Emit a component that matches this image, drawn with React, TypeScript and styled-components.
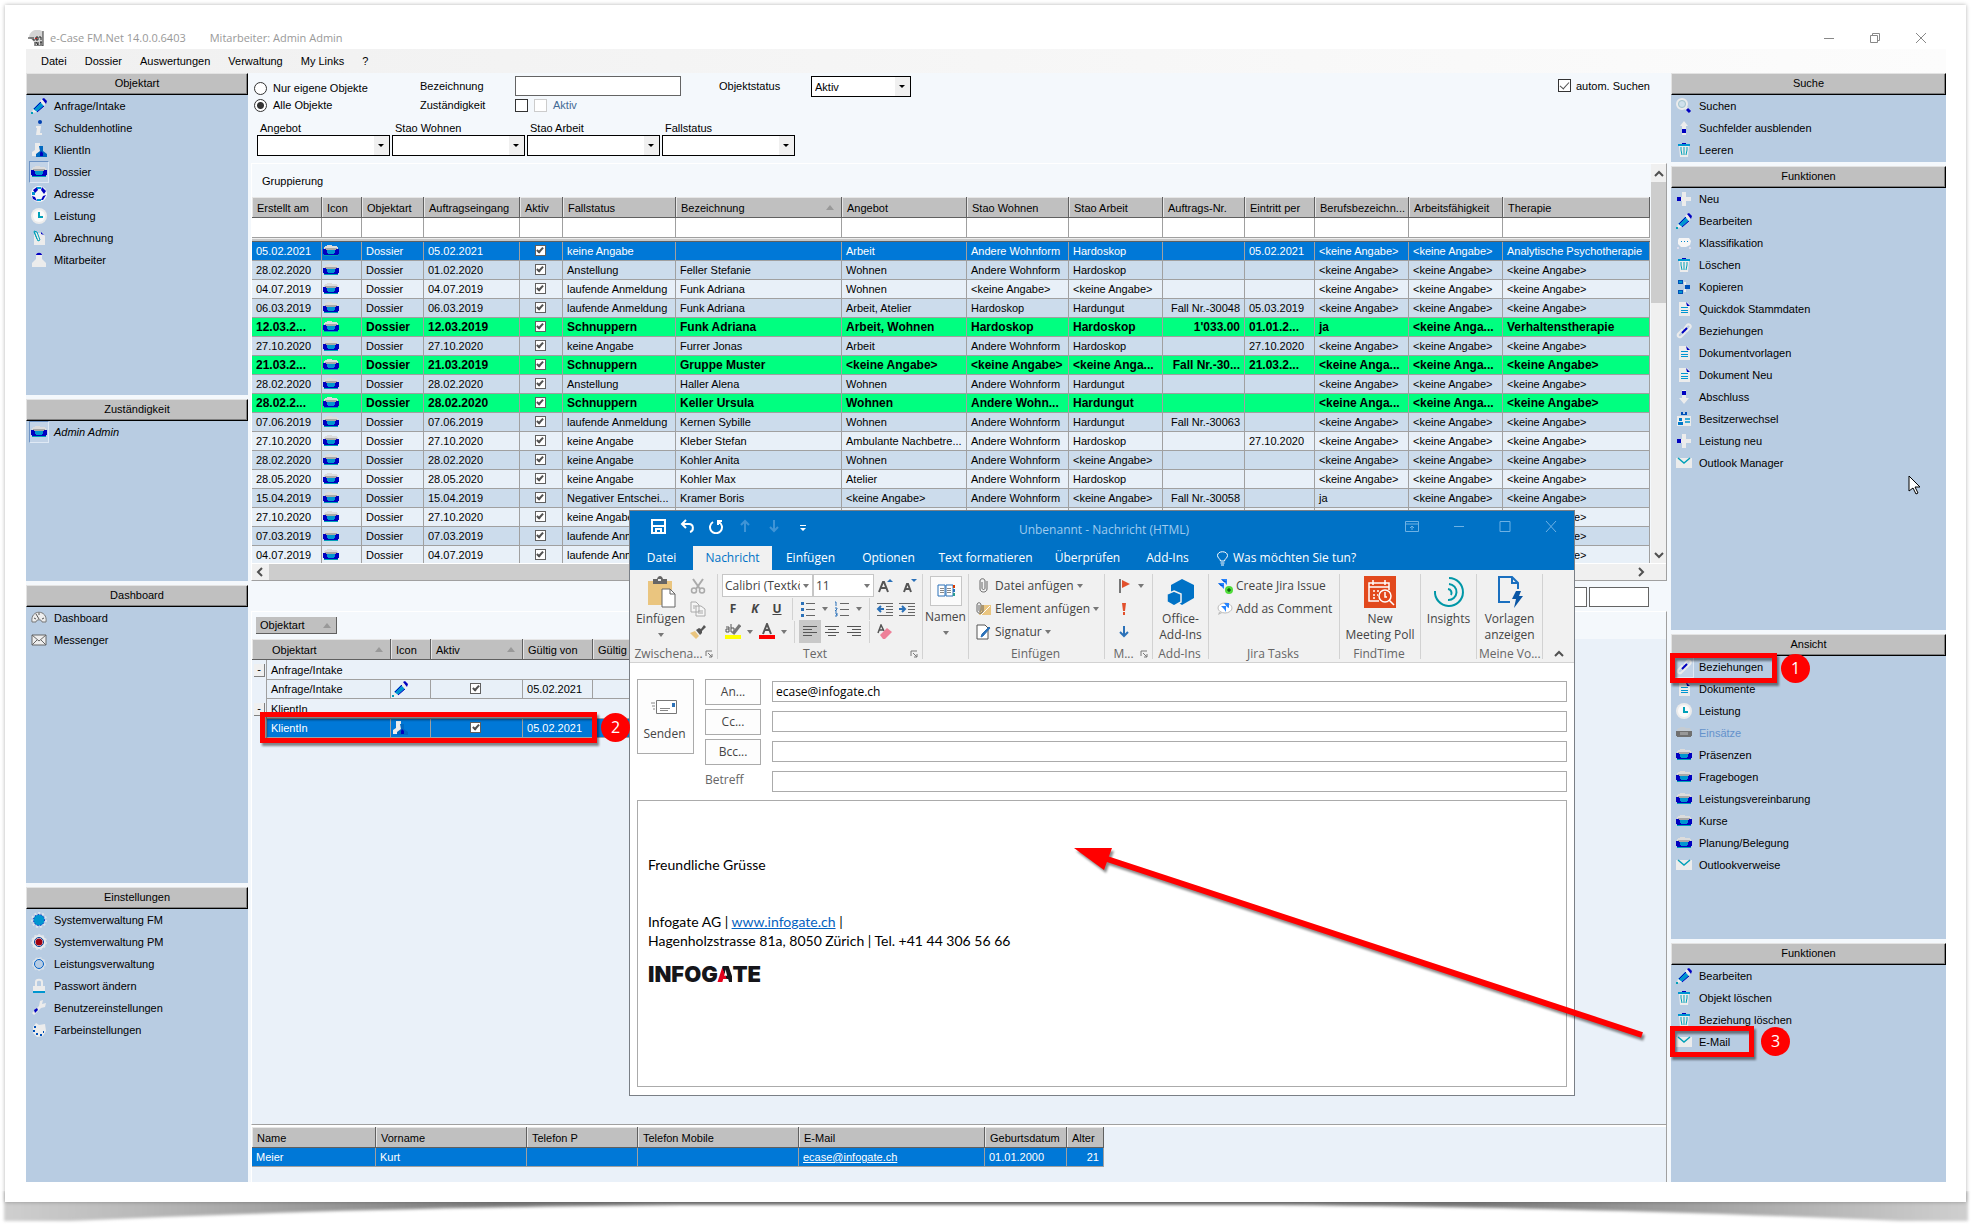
import React from "react";
import styled, { createGlobalStyle, css } from "styled-components";

const SANS = `"Liberation Sans", Arial, sans-serif`;
const HUMAN = `"Open Sans", "Noto Sans", sans-serif`;

const GlobalStyle = createGlobalStyle`
  *, *::before, *::after { box-sizing: border-box; }
  body { margin: 0; background: #fff; font: 11px/14px ${SANS}; color: #000; }
  button, input, select { font: inherit; color: inherit; margin: 0; border-radius: 0; }
  button { background: none; border: 0; padding: 0; text-align: left; }
  svg { display: block; flex: none; }
`;

/* ---------- page frame ---------- */

const Page = styled.div`
  position: relative;
  min-height: 100vh;
  overflow: hidden;
  padding: 5px 14px 29px 5px;
  display: flex;
`;

const CurlShadow = styled.svg`
  position: absolute;
  left: 0;
  bottom: 0;
  width: 100%;
  height: 40px;
`;

const Card = styled.div`
  position: relative;
  flex: 1;
  min-width: 0;
  background: #fff;
  box-shadow: 0 0 4px rgba(0, 0, 0, 0.3);
  padding: 20px 20px 20px 21px;
  display: flex;
  flex-direction: column;
`;

const TitleBar = styled.header`
  height: 24px;
  display: flex;
  align-items: center;
  gap: 6px;
  padding: 1px 19px 0 2px;
  font: 11px/16px ${HUMAN};
  color: #999;
`;

const TitleText = styled.span`
  margin-right: 18px;
`;

const CaptionButtons = styled.div`
  margin-left: auto;
  display: flex;
  gap: 34px;
`;

const MenuBar = styled.nav`
  height: 24px;
  display: flex;
  align-items: center;
  padding-left: 6px;
  background: linear-gradient(90deg, #f0f0f0, #fcfcfc);
`;

const MenuItem = styled.button`
  padding: 0 9px;
`;

const Shell = styled.div`
  flex: 1;
  display: grid;
  grid-template-columns: 222px minmax(0, 1fr) 275px;
  background: #f4f8fc;
`;

/* ---------- side panels ---------- */

const Side = styled.aside`
  display: flex;
  flex-direction: column;
  gap: 4px;
`;

const PanelBox = styled.section<{ $share: number }>`
  flex: ${(p) => p.$share} 1 0px;
  background: #b8cce2;
`;

const PanelTitle = styled.h2`
  margin: 0;
  height: 22px;
  font: 11px/18px ${SANS};
  text-align: center;
  background: #c0c0c0;
  border: solid;
  border-width: 1px;
  border-color: #e3e3e3 #000 #000 #e3e3e3;
  box-shadow: inset -1px -1px 0 #808080;
`;

const PanelItem = styled.button<{ $disabled?: boolean; $italic?: boolean }>`
  width: 100%;
  height: 22px;
  display: flex;
  align-items: center;
  gap: 5px;
  padding-left: 3px;
  color: ${(p) => (p.$disabled ? "#6492cc" : "#000")};
  font-style: ${(p) => (p.$italic ? "italic" : "normal")};
  white-space: nowrap;
`;

const IconSlot = styled.span<{ $active?: boolean }>`
  width: 20px;
  height: 22px;
  display: grid;
  place-items: center;
  border: 1px solid transparent;
  ${(p) =>
    p.$active &&
    css`
      border-color: #6d93c4 #dfe9f5 #dfe9f5 #6d93c4;
      background: #c2d3e7;
    `}
`;

/* ---------- centre column ---------- */

const Centre = styled.main`
  display: flex;
  flex-direction: column;
  padding: 0 4px 0 3px;
  min-width: 0;
`;

const SearchForm = styled.form`
  height: 90px;
  display: flex;
  flex-direction: column;
  padding: 3px 17px 0 3px;
`;

const SearchTop = styled.div`
  display: flex;
  height: 44px;
`;

const Stack = styled.div<{ $width: number; $gap: number; $top: number }>`
  width: ${(p) => p.$width}px;
  display: flex;
  flex-direction: column;
  gap: ${(p) => p.$gap}px;
  padding-top: ${(p) => p.$top}px;
`;

const Field = styled.div`
  display: flex;
  align-items: center;
  gap: 6px;
`;

const TopCell = styled.div<{ $width: number }>`
  width: ${(p) => p.$width}px;
  display: flex;
  flex-direction: column;
  gap: 2px;
`;

const AutoSearch = styled.div`
  margin-left: auto;
  display: flex;
  align-items: flex-start;
  gap: 5px;
  padding-top: 3px;
`;

const RadioDot = styled.input`
  appearance: none;
  width: 13px;
  height: 13px;
  border: 1px solid #333;
  border-radius: 50%;
  background: #fff;
  &:checked {
    background: radial-gradient(circle, #333 0 3px, #fff 4px);
  }
`;

const Tick = styled.input<{ $small?: boolean }>`
  appearance: none;
  flex: none;
  width: ${(p) => (p.$small ? 11 : 13)}px;
  height: ${(p) => (p.$small ? 11 : 13)}px;
  border: 1px solid ${(p) => (p.disabled ? "#ccc" : p.$small ? "#606060" : "#333")};
  background: #fff;
  display: inline-grid;
  place-items: center;
  &:checked::after {
    content: "";
    width: ${(p) => (p.$small ? 4 : 5)}px;
    height: ${(p) => (p.$small ? 7 : 9)}px;
    margin-top: -2px;
    border: solid #505050;
    border-width: 0 ${(p) => (p.$small ? "2px 2px" : "1px 1px")} 0;
    transform: rotate(42deg);
  }
`;

const MutedLabel = styled.label`
  color: #426a94;
`;

const TextBox = styled.input<{ $width: number }>`
  width: ${(p) => p.$width}px;
  height: 20px;
  border: 1px solid #646464;
  background: #fff;
  padding: 0 4px;
`;

const SelectWrap = styled.span<{ $width: number }>`
  position: relative;
  display: block;
  width: ${(p) => p.$width}px;
  select {
    appearance: none;
    display: block;
    width: 100%;
    height: 21px;
    border: 1px solid #000;
    background: linear-gradient(270deg, #f0f0f0 15px, #fff 15px);
    padding: 0 18px 0 3px;
  }
  &::after {
    content: "";
    position: absolute;
    right: 6px;
    top: 9px;
    border: 3px solid transparent;
    border-top-color: #000;
    border-bottom: 0;
    pointer-events: none;
  }
`;

const FilterRow = styled.div`
  display: flex;
  gap: 2px;
  padding-left: 3px;
`;

const FilterField = styled.div`
  display: flex;
  flex-direction: column;
  label {
    padding: 2px 0 0 3px;
    line-height: 13px;
  }
`;

/* ---------- object grid ---------- */

const Sunken = styled.section<{ $grow?: boolean }>`
  display: flex;
  flex-direction: column;
  flex: ${(p) => (p.$grow ? "1 1 auto" : "none")};
  border: solid;
  border-width: 1px;
  border-color: #fff #a0a0a0 #a0a0a0 #fff;
`;

const GridFrame = styled.div`
  display: grid;
  grid-template-columns: minmax(0, 1fr) 16px;
`;

const GridView = styled.div`
  height: 399px;
  overflow: hidden;
`;

const GroupHint = styled.div`
  height: 33px;
  padding: 10px 10px 0;
  line-height: 14px;
`;

const Table = styled.table<{ $fill?: boolean }>`
  table-layout: fixed;
  border-collapse: separate;
  border-spacing: 0;
  width: ${(p) => (p.$fill ? "100%" : "0")};
  td,
  th {
    padding: 0 4px;
    overflow: hidden;
    white-space: nowrap;
  }
`;

const Th = styled.th<{ $indent?: boolean }>`
  height: 21px;
  font-weight: normal;
  text-align: left;
  background: #c0c0c0;
  border-right: 1px solid #606060;
  border-bottom: 1px solid #606060;
  box-shadow: inset 1px 1px 0 #e6e6e6;
  ${(p) =>
    p.$indent &&
    css`
      && {
        padding-left: 19px;
      }
    `}
`;

const HeadRow = styled.span`
  display: flex;
  align-items: center;
  justify-content: space-between;
  padding: 1px 0 0 1px;
`;

const SortMark = styled.i`
  border: 4px solid transparent;
  border-bottom: 5px solid #999;
  border-top: 0;
  margin-right: 3px;
`;

const FilterCell = styled.td`
  height: 20px;
  background: #fff;
  border-right: 1px solid #a0a0a0;
  border-bottom: 1px solid #a0a0a0;
`;

const BandCell = styled.td`
  height: 4px;
  background: #c8c8c8;
  border-top: 1px solid #f0f0f0;
  border-bottom: 1px solid #606060;
`;

type Tone = "selected" | "green" | "dark" | "light";
const toneColour: Record<Tone, string> = {
  selected: "#0078d7",
  green: "#00ff80",
  dark: "#ccdcec",
  light: "#e8f0f8",
};

const Row = styled.tr<{ $tone: Tone }>`
  background: ${(p) => toneColour[p.$tone]};
  color: ${(p) => (p.$tone === "selected" ? "#fff" : "#000")};
  font-weight: ${(p) => (p.$tone === "green" ? "bold" : "normal")};
  font-size: ${(p) => (p.$tone === "green" ? 12 : 11)}px;
`;

const Td = styled.td<{ $align?: "center" | "right" | "icon" }>`
  height: 19px;
  line-height: 14px;
  border-right: 1px solid #a0a0a0;
  border-bottom: 1px solid #a0a0a0;
  text-align: ${(p) => (p.$align === "center" || p.$align === "right" ? p.$align : "left")};
  ${(p) =>
    p.$align === "icon" &&
    css`
      && {
        padding: 0 1px;
      }
    `}
  input {
    vertical-align: middle;
    margin: 0 2px 2px 0;
  }
  a {
    color: inherit;
  }
`;

const VBar = styled.div`
  display: flex;
  flex-direction: column;
  align-items: center;
  background: #f0f0f0;
  margin-left: 1px;
  padding: 5px 0 3px;
`;

const VThumb = styled.div`
  width: 100%;
  height: 121px;
  margin: 3px 0 auto;
  background: #cdcdcd;
`;

const HBar = styled.div`
  grid-column: 1 / 3;
  display: flex;
  align-items: center;
  height: 17px;
  background: #f0f0f0;
  border-top: 1px solid #fff;
  padding: 0 20px 0 3px;
`;

const HThumb = styled.div`
  width: 900px;
  height: 100%;
  margin: 0 auto 0 4px;
  background: #cdcdcd;
`;

const PagerStrip = styled.div`
  height: 30px;
  display: flex;
  justify-content: flex-end;
  align-items: flex-start;
  gap: 2px;
  padding: 6px 18px 0 0;
`;

/* ---------- relations and detail grids ---------- */

const ChipBar = styled.div`
  height: 27px;
  padding: 5px 4px;
`;

const Chip = styled.button`
  width: 81px;
  height: 17px;
  display: flex;
  align-items: center;
  justify-content: space-between;
  padding: 0 2px 0 4px;
  background: #c0c0c0;
  border-right: 1px solid #606060;
  border-bottom: 1px solid #606060;
`;

const Pale = styled.div`
  flex: 1;
  background: #eaf1f9;
`;

const GroupTd = styled.td`
  height: 20px;
  border-bottom: 1px solid #a0a0a0;
`;

const ExpandTd = styled.td`
  background: #eaf1f9;
  border-right: 1px solid #a0a0a0;
  && {
    padding: 0 0 0 2px;
  }
`;

const Expander = styled.button`
  width: 11px;
  height: 13px;
  line-height: 11px;
  text-align: center;
  background: #f0f0f0;
  border-right: 1px solid #808080;
  border-bottom: 1px solid #808080;
  display: block;
`;

const Detail = styled.section`
  height: 57px;
  background: #eaf1f9;
  border-right: 1px solid #a0a0a0;
  border-left: 1px solid #fff;
  padding-top: 2px;
  box-shadow: inset 0 2px 0 #fff;
`;

/* ---------- mail window ---------- */

const MailWindow = styled.div`
  position: absolute;
  left: 624px;
  top: 505px;
  width: 946px;
  height: 586px;
  border: 1px solid #7a7f86;
  background: #fff;
  display: flex;
  flex-direction: column;
  font: 12px/16px ${HUMAN};
  color: #444;
`;

const MailTitle = styled.div`
  height: 35px;
  background: #0072c6;
  color: #9fcbee;
  display: grid;
  grid-template-columns: 1fr auto 1fr;
  align-items: center;
  padding: 0 17px 4px 21px;
`;

const QuickBar = styled.div`
  display: flex;
  align-items: center;
  gap: 14px;
`;

const MailCaption = styled.div`
  display: flex;
  justify-content: flex-end;
  gap: 34px;
`;

const MailName = styled.span`
  padding-top: 7px;
`;

const TabBar = styled.div`
  height: 24px;
  display: flex;
  background: #0072c6;
`;

const Tab = styled.button<{ $width: number; $on?: boolean }>`
  width: ${(p) => p.$width}px;
  text-align: center;
  white-space: nowrap;
  color: ${(p) => (p.$on ? "#0072c6" : "#fff")};
  background: ${(p) => (p.$on ? "#f1f1f1" : "transparent")};
`;

const TellMe = styled.button`
  display: flex;
  align-items: center;
  gap: 5px;
  padding-left: 14px;
  color: #fff;
  white-space: nowrap;
`;

const Ribbon = styled.div`
  height: 93px;
  background: #f1f1f1;
  border-bottom: 1px solid #d2d2d2;
  display: grid;
  grid-template-columns: 88px 205px 46px 136px 48px 56px 131px 81px 56px 66px 1fr;
  padding: 4px 0 3px;
`;

const RGroup = styled.div`
  display: flex;
  flex-direction: column;
  border-right: 1px solid #d2d2d2;
  min-width: 0;
`;

const RBody = styled.div<{ $pad?: number }>`
  flex: 1;
  display: flex;
  padding-left: ${(p) => p.$pad ?? 0}px;
  min-width: 0;
`;

const RLabel = styled.div`
  height: 10px;
  line-height: 10px;
  display: flex;
  align-items: center;
  color: #666;
  padding: 0 4px 0 2px;
  white-space: nowrap;
  span {
    flex: 1;
    text-align: center;
  }
`;

const Big = styled.button`
  flex: 1;
  display: flex;
  flex-direction: column;
  align-items: center;
  padding-top: 2px;
  text-align: center;
  white-space: nowrap;
`;

const BigIcon = styled.span<{ $boxed?: boolean }>`
  height: 32px;
  min-width: 32px;
  margin-bottom: 3px;
  display: grid;
  place-items: center;
  ${(p) =>
    p.$boxed &&
    css`
      height: 30px;
      border: 1px solid #c6c6c6;
      background: #fbfbfb;
    `}
`;

const Caret = styled.i`
  display: inline-block;
  flex: none;
  margin: 6px auto 0;
  border: 3px solid transparent;
  border-top: 4px solid #777;
  border-bottom: 0;
`;

const ToolCol = styled.div<{ $width?: number }>`
  width: ${(p) => (p.$width ? `${p.$width}px` : "auto")};
  display: flex;
  flex-direction: column;
  align-items: flex-start;
`;

const ToolRow = styled.div`
  height: 23px;
  display: flex;
  align-items: center;
`;

const Tool = styled.button<{ $w?: number; $on?: boolean }>`
  width: ${(p) => p.$w ?? 22}px;
  height: 23px;
  display: grid;
  place-items: center;
  background: ${(p) => (p.$on ? "#c8c8c8" : "transparent")};
`;

const Drop = styled.button`
  width: 12px;
  height: 23px;
  display: grid;
  place-items: center;
  &::after {
    content: "";
    border: 3px solid transparent;
    border-top: 4px solid #777;
    border-bottom: 0;
  }
`;

const Rule = styled.i`
  width: 1px;
  height: 22px;
  margin: 0 4px;
  background: #d2d2d2;
`;

const Glyph = styled.span<{ $italic?: boolean; $under?: boolean }>`
  font-weight: bold;
  font-style: ${(p) => (p.$italic ? "italic" : "normal")};
  text-decoration: ${(p) => (p.$under ? "underline" : "none")};
`;

const Combo = styled.span<{ $width: number }>`
  position: relative;
  width: ${(p) => p.$width}px;
  select {
    appearance: none;
    display: block;
    width: 100%;
    height: 23px;
    border: 1px solid #c6c6c6;
    background: #fff;
    padding: 0 12px 0 2px;
    overflow: hidden;
  }
  &::after {
    content: "";
    position: absolute;
    right: 4px;
    top: 10px;
    border: 3px solid transparent;
    border-top: 4px solid #777;
    border-bottom: 0;
    pointer-events: none;
  }
`;

const Wide = styled.button`
  height: 23px;
  display: flex;
  align-items: center;
  gap: 3px;
  white-space: nowrap;
`;

const WideIcon = styled.span`
  width: 17px;
  display: grid;
  place-items: center;
`;

const WideCaret = styled(Caret)`
  margin: 0;
`;

const CollapseButton = styled.button`
  display: flex;
  justify-content: center;
  align-items: flex-end;
`;

const MailForm = styled.form`
  display: grid;
  grid-template-columns: 57px 56px minmax(0, 1fr);
  column-gap: 11px;
  row-gap: 4px;
  padding: 16px 7px 5px;
`;

const Boxed = styled.button`
  height: 26px;
  border: 1px solid #ababab;
  background: #fdfdfd;
  text-align: center;
`;

const Send = styled(Boxed)`
  grid-row: 1 / 5;
  height: 75px;
  display: flex;
  flex-direction: column;
  align-items: center;
  justify-content: flex-end;
  gap: 11px;
  padding: 0 2px 11px 0;
`;

const SubjectLabel = styled.label`
  height: 26px;
  line-height: 22px;
  color: #666;
`;

const MailInput = styled.input`
  margin-top: 2px;
  width: 100%;
  height: 21px;
  border: 1px solid #ababab;
  padding: 0 3px;
  color: #000;
`;

const MailBody = styled.div`
  flex: 1;
  margin: 0 7px 8px;
  border: 1px solid #ababab;
  padding: 54px 10px 0;
  font: 14px/19px Lato, Carlito, sans-serif;
  color: #000;
  p {
    margin: 0;
  }
`;

const Greeting = styled.p`
  && {
    margin-bottom: 38px;
  }
`;

const SiteLink = styled.a`
  color: #0563c1;
`;

const Brand = styled.div`
  margin-top: 12px;
  font: 900 22px/24px Inter, "DejaVu Sans", sans-serif;
  color: #15151a;
  span {
    background: linear-gradient(68deg, #e2001a 50%, #15151a 52%);
    background-clip: text;
    -webkit-background-clip: text;
    color: transparent;
  }
`;

/* ---------- annotations ---------- */

const Mark = styled.div<{ $x: number; $y: number; $w: number; $h: number }>`
  position: absolute;
  left: ${(p) => p.$x}px;
  top: ${(p) => p.$y}px;
  width: ${(p) => p.$w}px;
  height: ${(p) => p.$h}px;
  border: 5px solid #f00;
  filter: drop-shadow(2px 3px 1px rgba(0, 0, 0, 0.45));
  pointer-events: none;
`;

const Badge = styled.div<{ $x: number; $y: number }>`
  position: absolute;
  left: ${(p) => p.$x}px;
  top: ${(p) => p.$y}px;
  width: 29px;
  height: 29px;
  border-radius: 50%;
  background: #f00;
  color: #fff;
  font: 16px/29px ${HUMAN};
  text-align: center;
`;

const ArrowLayer = styled.svg`
  position: absolute;
  left: 1060px;
  top: 835px;
  pointer-events: none;
`;

const Pointer = styled.svg`
  position: absolute;
  left: 1903px;
  top: 470px;
`;

/* ---------- icons ---------- */

const NAVY = "#0000c0";
const CYAN = "#0096d0";
const TEAL = "#00a0b8";
const PEARL = "#ececec";

const drawings: Record<string, React.ReactNode> = {
  folder: (
    <>
      <path d="M2 3h2V2h5v1h5v1h1v2H1V4h1z" fill="#dcdcdc" />
      <path d="M2 5h12v2H2z" fill="#a8a8a8" />
      <path d="M0 6h3v1h10V6h3v5h-1v1H1v-1H0z" fill={NAVY} />
      <path d="M4 7h8v3h-1v1H5v-1H4z" fill={CYAN} />
      <path d="M1 12h14v1H1z" fill={TEAL} />
    </>
  ),
  folderGrey: (
    <>
      <path d="M2 3h2V2h5v1h5v1h1v2H1V4h1z" fill="#c4ccd4" />
      <path d="M0 6h16v5h-1v1H1v-1H0z" fill="#707070" />
      <path d="M4 7h8v3H4z" fill="#989898" />
    </>
  ),
  pencil: (
    <>
      <path d="M2 11l7-7 4 4-7 6z" fill={CYAN} />
      <path d="M3 11l7-7M6 14l7-6" stroke={NAVY} strokeWidth="1" />
      <path d="M9 3l2-2 4 4-2 3z" fill={PEARL} />
      <path d="M11 1l2-1 3 3-1 3z" fill={NAVY} />
      <path d="M2 11l4 3-5 1z" fill={PEARL} />
      <path d="M0 14h2v2H0z" fill={TEAL} />
    </>
  ),
  info: (
    <>
      <path d="M5 6h5l-1 7h2v2H5l1-7H5z" fill={PEARL} />
      <circle cx="9" cy="2" r="2" fill="#0040b0" />
    </>
  ),
  client: (
    <>
      <path d="M4 1h5v6l2 4v3H1v-4l3-2z" fill={PEARL} />
      <path d="M8 4h4v5l4 3v3H5v-3l4-3z" fill="#0068c0" />
      <path d="M10 9l2 2v3h-3v-3z" fill={NAVY} />
    </>
  ),
  globe: (
    <>
      <circle cx="8" cy="8" r="8" fill="#f4f7fa" />
      <path d="M2 4l4-3 1 3-3 3zM11 1l4 4-2 3-3-4zM1 10l3 1 2 4-4-2zM12 10l3-1-3 5-2 0z" fill={NAVY} />
      <path d="M6 1h4v2H6zM1 6h3v3H1zM6 13h4v2H6z" fill={CYAN} />
    </>
  ),
  clock: (
    <>
      <circle cx="8" cy="8" r="8" fill={PEARL} />
      <circle cx="8" cy="8" r="6" fill="#fafafa" />
      <path d="M8 4v5h4" stroke={TEAL} strokeWidth="2" fill="none" />
    </>
  ),
  clip: (
    <>
      <path d="M3 3h8l3 3v9H3z" fill={PEARL} />
      <path d="M3 2l4 9 2-1-3-8-3-1 3 8" stroke={TEAL} fill="none" />
      <path d="M10 2l3 3-3-1z" fill={NAVY} />
    </>
  ),
  person: (
    <>
      <path d="M5 1h6v6l4 4v4H1v-4l4-4z" fill={PEARL} />
      <path d="M5 3c0-3 6-3 6 0z" fill={NAVY} />
    </>
  ),
  gauge: (
    <>
      <path d="M1 12c-2-13 16-13 14 0h-4c0-3-6-3-6 0z" fill="#eee" stroke="#777" />
      <path d="M8 9L5 4M3 8l2 1M13 8l-2 1M8 3v2" stroke="#555" />
    </>
  ),
  envelope: (
    <>
      <path d="M1 3h14v10H1z" fill="#eee" stroke="#666" />
      <path d="M1 3l7 6 7-6M1 13l5-5M15 13l-5-5" stroke="#666" fill="none" />
    </>
  ),
  gearBlue: (
    <>
      <circle cx="8" cy="8" r="7" fill="none" stroke="#dce4ec" strokeWidth="2" strokeDasharray="2 2" />
      <circle cx="8" cy="8" r="5.5" fill={CYAN} />
      <circle cx="8" cy="8" r="5.5" fill="none" stroke={NAVY} strokeDasharray="1 2" />
    </>
  ),
  gearRed: (
    <>
      <circle cx="8" cy="8" r="7" fill={PEARL} stroke="#dce4ec" strokeWidth="2" strokeDasharray="2 2" />
      <circle cx="8" cy="8" r="4.5" fill="#fff" stroke="#004098" strokeWidth="1" />
      <circle cx="8" cy="8" r="3.5" fill="#a00010" />
    </>
  ),
  gearRing: (
    <>
      <circle cx="8" cy="8" r="6" fill={PEARL} stroke="#d4dee8" strokeWidth="2" strokeDasharray="2 2" />
      <circle cx="8" cy="8" r="4.5" fill="#b8cce2" stroke="#0060c8" strokeWidth="1" />
    </>
  ),
  lock: (
    <>
      <path d="M5 8V4c0-3 6-3 6 0v4" stroke={PEARL} strokeWidth="2" fill="none" />
      <path d="M2 8h12v6H2z" fill={PEARL} />
      <path d="M2 13h12v2H2z" fill={CYAN} />
    </>
  ),
  wrench: (
    <>
      <path d="M1 13l7-7 1-5 3-1-1 4 4-1-1 4-4 1-7 7z" fill={PEARL} />
      <path d="M3 10l3-2 1 2-3 3z" fill={NAVY} />
    </>
  ),
  palette: (
    <>
      <path d="M2 5l3-4 3 2 6-1 1 7-3 5-6 1-4-4z" fill={PEARL} />
      <path d="M3 4h2v2H3zM2 8h2v2H2zM5 11h2v2H5zM9 12h2v2H9zM12 9h1v2h-1z" fill="#0050b8" />
    </>
  ),
  search: (
    <>
      <circle cx="6" cy="6" r="5" fill="#cfe0ec" stroke={PEARL} strokeWidth="2" />
      <circle cx="6" cy="6" r="3.500" fill="none" stroke="#a4c4cc" />
      <path d="M10 10l2 2" stroke={PEARL} strokeWidth="3" />
      <path d="M11 11l3 3" stroke={NAVY} strokeWidth="3" />
    </>
  ),
  up: (
    <>
      <path d="M8 1l4 5h-2v9H6V6H4z" fill={PEARL} />
      <path d="M6 9h4v4H6z" fill={NAVY} />
    </>
  ),
  down: (
    <>
      <path d="M6 1h4v8h3l-5 6-5-6h3z" fill={PEARL} />
      <path d="M6 2h4v4H6z" fill={NAVY} />
    </>
  ),
  trash: (
    <>
      <path d="M3 4h10l-1 11H4z" fill={PEARL} />
      <path d="M2 2h12v2H2z" fill={CYAN} />
      <path d="M6 1h4v1H6z" fill={NAVY} />
      <path d="M5 5v3l1 5M8 5v8M11 5v3l-1 5" stroke={TEAL} fill="none" />
    </>
  ),
  plus: (
    <>
      <path d="M6 1h4v5h5v4h-5v5H6v-5H1V6h5z" fill={PEARL} />
      <path d="M1 6h4v4H1z" fill={NAVY} />
    </>
  ),
  speech: (
    <>
      <path d="M3 3h10l2 3-1 4-4 2H5L2 9V5z" fill="#f6f6f6" />
      <path d="M5 6h1v1H5zM8 6h1v1H8zM11 6h1v1h-1z" fill="#08c" />
      <path d="M1 12h2v2H1zM13 12h2v2h-2z" fill="#dde" />
    </>
  ),
  copy: (
    <>
      <path d="M2 1h5v4H2zM2 11h5v4H2z" fill="#0050b8" />
      <path d="M3 2h3v2H3zM3 12h3v2H3z" fill={CYAN} />
      <path d="M9 6h5v4H9z" fill="#0050b8" />
      <path d="M8 3h2v3H8zM8 10h2v3H8z" fill={PEARL} />
    </>
  ),
  doc: (
    <>
      <path d="M3 1h8l3 3v11H3z" fill={PEARL} />
      <path d="M10 1l4 4h-3z" fill={NAVY} />
      <path d="M5 6.500h7M5 9.500h7M5 11.500h7" stroke={CYAN} />
    </>
  ),
  link: (
    <>
      <path d="M2 11l4-4 3 3-4 4c-2 1-4-1-3-3zM8 6l3-4c2-2 5 1 3 3l-4 4" fill="none" stroke={PEARL} strokeWidth="2" />
      <path d="M6 10l5-5" stroke={NAVY} strokeWidth="2" />
    </>
  ),
  owner: (
    <>
      <path d="M1 5h14v10H1z" fill={PEARL} />
      <path d="M5 4V1h2v2h2V1h2v3z" fill="#0050b8" />
      <path d="M3 7h3v3H3zM2 11h5v3H2z" fill="#0078c8" />
      <path d="M9 8h5M9 11h5" stroke={CYAN} strokeWidth="1.5" />
    </>
  ),
  mail: (
    <>
      <path d="M0 3h16v10H0z" fill={PEARL} />
      <path d="M2 3l6 5 6-5" stroke={TEAL} strokeWidth="1.500" fill="none" />
    </>
  ),
};

const Icon = ({ name, size = 16 }: { name: string; size?: number }) => (
  <svg width={size} height={size} viewBox="0 0 16 16" aria-hidden="true">
    {drawings[name]}
  </svg>
);

const Chevron = ({ d }: { d: string }) => (
  <svg width="10" height="10" viewBox="0 0 10 10" aria-hidden="true">
    <path d={d} fill="none" stroke="#505050" strokeWidth="2" />
  </svg>
);

const Launcher = () => (
  <svg width="8" height="8" viewBox="0 0 8 8" aria-hidden="true">
    <path d="M1 6V1h6M3 3l4 4M7 4v3H4" fill="none" stroke="#777" />
  </svg>
);

const Lines = ({ rows }: { rows: [number, number][] }) => (
  <svg width="16" height="14" viewBox="0 0 16 14" aria-hidden="true">
    {rows.map(([x, w], i) => (
      <rect key={i} x={x} y={1 + i * 3} width={w} height="1" fill="#555" />
    ))}
  </svg>
);

/* ---------- data ---------- */

type Item = { icon: string; text: string; active?: boolean; disabled?: boolean; italic?: boolean };
type PanelData = { title: string; share: number; items: Item[] };

const it = (icon: string, text: string, extra: Partial<Item> = {}): Item => ({ icon, text, ...extra });

const leftPanels: PanelData[] = [
  {
    title: "Objektart",
    share: 322,
    items: [
      it("pencil", "Anfrage/Intake"),
      it("info", "Schuldenhotline"),
      it("client", "KlientIn"),
      it("folder", "Dossier", { active: true }),
      it("globe", "Adresse"),
      it("clock", "Leistung"),
      it("clip", "Abrechnung"),
      it("person", "Mitarbeiter"),
    ],
  },
  { title: "Zuständigkeit", share: 182, items: [it("folder", "Admin Admin", { active: true, italic: true })] },
  { title: "Dashboard", share: 298, items: [it("gauge", "Dashboard"), it("envelope", "Messenger")] },
  {
    title: "Einstellungen",
    share: 295,
    items: [
      it("gearBlue", "Systemverwaltung FM"),
      it("gearRed", "Systemverwaltung PM"),
      it("gearRing", "Leistungsverwaltung"),
      it("lock", "Passwort ändern"),
      it("wrench", "Benutzereinstellungen"),
      it("palette", "Farbeinstellungen"),
    ],
  },
];

const rightPanels: PanelData[] = [
  {
    title: "Suche",
    share: 89,
    items: [it("search", "Suchen"), it("up", "Suchfelder ausblenden"), it("trash", "Leeren")],
  },
  {
    title: "Funktionen",
    share: 464,
    items: [
      it("plus", "Neu"),
      it("pencil", "Bearbeiten"),
      it("speech", "Klassifikation"),
      it("trash", "Löschen"),
      it("copy", "Kopieren"),
      it("doc", "Quickdok Stammdaten"),
      it("link", "Beziehungen"),
      it("doc", "Dokumentvorlagen"),
      it("doc", "Dokument Neu"),
      it("down", "Abschluss"),
      it("owner", "Besitzerwechsel"),
      it("plus", "Leistung neu"),
      it("mail", "Outlook Manager"),
    ],
  },
  {
    title: "Ansicht",
    share: 305,
    items: [
      it("link", "Beziehungen", { active: true }),
      it("doc", "Dokumente"),
      it("clock", "Leistung"),
      it("folderGrey", "Einsätze", { disabled: true }),
      it("folder", "Präsenzen"),
      it("folder", "Fragebogen"),
      it("folder", "Leistungsvereinbarung"),
      it("folder", "Kurse"),
      it("folder", "Planung/Belegung"),
      it("mail", "Outlookverweise"),
    ],
  },
  {
    title: "Funktionen",
    share: 239,
    items: [
      it("pencil", "Bearbeiten"),
      it("trash", "Objekt löschen"),
      it("trash", "Beziehung löschen"),
      it("mail", "E-Mail"),
    ],
  },
];

const columns: [string, number | undefined][] = [
  ["Erstellt am", 70],
  ["Icon", 40],
  ["Objektart", 62],
  ["Auftragseingang", 96],
  ["Aktiv", 43],
  ["Fallstatus", 113],
  ["Bezeichnung", 166],
  ["Angebot", 125],
  ["Stao Wohnen", 102],
  ["Stao Arbeit", 94],
  ["Auftrags-Nr.", 82],
  ["Eintritt per", 70],
  ["Berufsbezeichn...", 94],
  ["Arbeitsfähigkeit", 94],
  ["Therapie", undefined],
];

const KA = "<keine Angabe>";
const KB = "<keine Anga...";
const AW = "Andere Wohnform";

/* created, received, case status, name, offer, living, work, order no., entry, profession, ability, therapy */
const records: string[][] = [
  ["05.02.2021", "05.02.2021", "keine Angabe", "", "Arbeit", AW, "Hardoskop", "", "05.02.2021", KA, KA, "Analytische Psychotherapie"],
  ["28.02.2020", "01.02.2020", "Anstellung", "Feller Stefanie", "Wohnen", AW, "Hardoskop", "", "", KA, KA, KA],
  ["04.07.2019", "04.07.2019", "laufende Anmeldung", "Funk Adriana", "Wohnen", KA, KA, "", "", KA, KA, KA],
  ["06.03.2019", "06.03.2019", "laufende Anmeldung", "Funk Adriana", "Arbeit, Atelier", "Hardoskop", "Hardungut", "Fall Nr.-30048", "05.03.2019", KA, KA, KA],
  ["12.03.2...", "12.03.2019", "Schnuppern", "Funk Adriana", "Arbeit, Wohnen", "Hardoskop", "Hardoskop", "1'033.00", "01.01.2...", "ja", KB, "Verhaltenstherapie"],
  ["27.10.2020", "27.10.2020", "keine Angabe", "Furrer Jonas", "Arbeit", AW, "Hardoskop", "", "27.10.2020", KA, KA, KA],
  ["21.03.2...", "21.03.2019", "Schnuppern", "Gruppe Muster", KA, KA, KB, "Fall Nr.-30...", "21.03.2...", KB, KB, KA],
  ["28.02.2020", "28.02.2020", "Anstellung", "Haller Alena", "Wohnen", AW, "Hardungut", "", "", KA, KA, KA],
  ["28.02.2...", "28.02.2020", "Schnuppern", "Keller Ursula", "Wohnen", "Andere Wohn...", "Hardungut", "", "", KB, KB, KA],
  ["07.06.2019", "07.06.2019", "laufende Anmeldung", "Kernen Sybille", "Wohnen", AW, "Hardungut", "Fall Nr.-30063", "", KA, KA, KA],
  ["27.10.2020", "27.10.2020", "keine Angabe", "Kleber Stefan", "Ambulante Nachbetre...", AW, "Hardoskop", "", "27.10.2020", KA, KA, KA],
  ["28.02.2020", "28.02.2020", "keine Angabe", "Kohler Anita", "Wohnen", AW, KA, "", "", KA, KA, KA],
  ["28.05.2020", "28.05.2020", "keine Angabe", "Kohler Max", "Atelier", AW, "Hardoskop", "", "", KA, KA, KA],
  ["15.04.2019", "15.04.2019", "Negativer Entschei...", "Kramer Boris", KA, AW, KA, "Fall Nr.-30058", "", "ja", KA, KA],
  ["27.10.2020", "27.10.2020", "keine Angabe", "", "", "", "", "", "", "", "", KA],
  ["07.03.2019", "07.03.2019", "laufende Anmeldung", "", "", "", "", "", "", "", "", KA],
  ["04.07.2019", "04.07.2019", "laufende Anmeldung", "", "", "", "", "", "", "", "", KA],
];

const greenRows = [4, 6, 8];

const toneOf = (i: number): Tone =>
  i === 0 ? "selected" : greenRows.includes(i) ? "green" : i % 2 ? "dark" : "light";

/* ---------- parts ---------- */

const Panels = ({ data }: { data: PanelData[] }) => (
  <Side>
    {data.map((panel, i) => (
      <PanelBox key={i} $share={panel.share}>
        <PanelTitle>{panel.title}</PanelTitle>
        {panel.items.map((item) => (
          <PanelItem key={item.text} type="button" $disabled={item.disabled} $italic={item.italic}>
            <IconSlot $active={item.active}>
              <Icon name={item.icon} />
            </IconSlot>
            {item.text}
          </PanelItem>
        ))}
      </PanelBox>
    ))}
  </Side>
);

const DropDown = ({ id, width, value = "" }: { id: string; width: number; value?: string }) => (
  <SelectWrap $width={width}>
    <select id={id} defaultValue={value}>
      <option>{value}</option>
    </select>
  </SelectWrap>
);

const Search = () => (
  <SearchForm>
    <SearchTop>
      <Stack $width={166} $gap={3} $top={5}>
        <Field>
          <RadioDot type="radio" name="scope" id="own" />
          <label htmlFor="own">Nur eigene Objekte</label>
        </Field>
        <Field>
          <RadioDot type="radio" name="scope" id="all" defaultChecked />
          <label htmlFor="all">Alle Objekte</label>
        </Field>
      </Stack>
      <Stack $width={95} $gap={5} $top={3}>
        <label htmlFor="name">Bezeichnung</label>
        <label htmlFor="resp">Zuständigkeit</label>
      </Stack>
      <TopCell $width={204}>
        <TextBox id="name" $width={166} />
        <Field>
          <Tick type="checkbox" id="resp" />
          <Tick type="checkbox" id="respActive" disabled />
          <MutedLabel htmlFor="respActive">Aktiv</MutedLabel>
        </Field>
      </TopCell>
      <Stack $width={92} $gap={5} $top={3}>
        <label htmlFor="status">Objektstatus</label>
      </Stack>
      <TopCell $width={100}>
        <DropDown id="status" width={100} value="Aktiv" />
      </TopCell>
      <AutoSearch>
        <Tick type="checkbox" id="auto" defaultChecked />
        <label htmlFor="auto">autom. Suchen</label>
      </AutoSearch>
    </SearchTop>
    <FilterRow>
      {["Angebot", "Stao Wohnen", "Stao Arbeit", "Fallstatus"].map((name, i) => (
        <FilterField key={name}>
          <label htmlFor={`filter${i}`}>{name}</label>
          <DropDown id={`filter${i}`} width={133} />
        </FilterField>
      ))}
    </FilterRow>
  </SearchForm>
);

const ObjectGrid = () => (
  <Sunken>
    <GridFrame>
      <GridView>
        <GroupHint>Gruppierung</GroupHint>
        <Table $fill>
          <colgroup>
            {columns.map(([name, width]) => (
              <col key={name} width={width} />
            ))}
          </colgroup>
          <thead>
            <tr>
              {columns.map(([name]) => (
                <Th key={name}>
                  <HeadRow>
                    {name}
                    {name === "Bezeichnung" && <SortMark />}
                  </HeadRow>
                </Th>
              ))}
            </tr>
          </thead>
          <tbody>
            <tr>
              {columns.map(([name]) => (
                <FilterCell key={name} />
              ))}
            </tr>
            <tr>
              <BandCell colSpan={15} />
            </tr>
            {records.map((r, i) => (
              <Row key={i} $tone={toneOf(i)}>
                <Td>{r[0]}</Td>
                <Td $align="icon">
                  <Icon name="folder" />
                </Td>
                <Td>Dossier</Td>
                <Td>{r[1]}</Td>
                <Td $align="center">
                  <Tick $small type="checkbox" defaultChecked aria-label="Aktiv" />
                </Td>
                {r.slice(2).map((text, c) => (
                  <Td key={c} $align={c === 5 ? "right" : undefined}>
                    {text}
                  </Td>
                ))}
              </Row>
            ))}
          </tbody>
        </Table>
      </GridView>
      <VBar>
        <Chevron d="M1 7l4-4 4 4" />
        <VThumb />
        <Chevron d="M1 3l4 4 4-4" />
      </VBar>
      <HBar>
        <Chevron d="M7 1L3 5l4 4" />
        <HThumb />
        <Chevron d="M3 1l4 4-4 4" />
      </HBar>
    </GridFrame>
  </Sunken>
);

const Relations = () => (
  <Sunken $grow>
    <ChipBar>
      <Chip type="button">
        Objektart <SortMark />
      </Chip>
    </ChipBar>
    <Pale>
      <Table>
        <colgroup>
          {[15, 124, 40, 92, 70, 70].map((w, i) => (
            <col key={i} width={w} />
          ))}
        </colgroup>
        <thead>
          <tr>
            <Th colSpan={2} $indent>
              <HeadRow>
                Objektart <SortMark />
              </HeadRow>
            </Th>
            <Th>
              <HeadRow>Icon</HeadRow>
            </Th>
            <Th>
              <HeadRow>
                Aktiv <SortMark />
              </HeadRow>
            </Th>
            <Th>
              <HeadRow>Gültig von</HeadRow>
            </Th>
            <Th>
              <HeadRow>Gültig bis</HeadRow>
            </Th>
          </tr>
        </thead>
        <tbody>
          {(
            [
              ["Anfrage/Intake", "pencil", "light"],
              ["KlientIn", "client", "selected"],
            ] as [string, string, Tone][]
          ).map(([name, icon, tone]) => (
            <React.Fragment key={name}>
              <tr>
                <ExpandTd>
                  <Expander type="button" aria-label="Zuklappen">
                    -
                  </Expander>
                </ExpandTd>
                <GroupTd colSpan={5}>{name}</GroupTd>
              </tr>
              <Row $tone={tone}>
                <ExpandTd />
                <Td>{name}</Td>
                <Td $align="icon">
                  <Icon name={icon} />
                </Td>
                <Td $align="center">
                  <Tick $small type="checkbox" defaultChecked aria-label="Aktiv" />
                </Td>
                <Td>05.02.2021</Td>
                <Td />
              </Row>
            </React.Fragment>
          ))}
        </tbody>
      </Table>
    </Pale>
  </Sunken>
);

const detailColumns: [string, number][] = [
  ["Name", 124],
  ["Vorname", 151],
  ["Telefon P", 111],
  ["Telefon Mobile", 161],
  ["E-Mail", 186],
  ["Geburtsdatum", 82],
  ["Alter", 37],
];

const DetailGrid = () => (
  <Detail>
    <Table>
      <colgroup>
        {detailColumns.map(([name, w]) => (
          <col key={name} width={w} />
        ))}
      </colgroup>
      <thead>
        <tr>
          {detailColumns.map(([name]) => (
            <Th key={name}>
              <HeadRow>{name}</HeadRow>
            </Th>
          ))}
        </tr>
      </thead>
      <tbody>
        <Row $tone="selected">
          <Td>Meier</Td>
          <Td>Kurt</Td>
          <Td />
          <Td />
          <Td>
            <a href="mailto:ecase@infogate.ch">ecase@infogate.ch</a>
          </Td>
          <Td>01.01.2000</Td>
          <Td $align="right">21</Td>
        </Row>
      </tbody>
    </Table>
  </Detail>
);

const MailRibbon = () => (
  <Ribbon>
    <RGroup>
      <RBody $pad={4}>
        <Big type="button">
          <BigIcon>
            <svg width="30" height="32" viewBox="0 0 30 32">
              <path d="M2 5h24v24H2z" fill="#eac57f" />
              <path d="M7 3h4c1-4 5-4 6 0h4v5H7z" fill="#666" />
              <path d="M12 3h3v2h-3z" fill="#eee" />
              <path d="M16 13h8l5 5v13H16z" fill="#fff" stroke="#666" />
              <path d="M24 13v5h5" fill="none" stroke="#666" />
            </svg>
          </BigIcon>
          Einfügen
          <Caret />
        </Big>
        <ToolCol $width={30}>
          <Tool type="button" aria-label="Ausschneiden">
            <svg width="16" height="16" viewBox="0 0 16 16">
              <path d="M3 1l7 10M13 1L6 11" stroke="#aaa" strokeWidth="2" />
              <circle cx="4" cy="12.500" r="2.500" fill="none" stroke="#aaa" strokeWidth="1.500" />
              <circle cx="12" cy="12.500" r="2.500" fill="none" stroke="#aaa" strokeWidth="1.500" />
            </svg>
          </Tool>
          <Tool type="button" aria-label="Kopieren">
            <svg width="16" height="16" viewBox="0 0 16 16" fill="#f6f6f6" stroke="#aaa">
              <path d="M1 1h5l3 3v7H1zM6 5h5l4 3v7H6z" />
              <path d="M3 5h3M3 7h2M8 10h5M8 12h5" />
            </svg>
          </Tool>
          <Tool type="button" aria-label="Format übertragen">
            <svg width="16" height="16" viewBox="0 0 16 16">
              <path d="M0 9l5-2 4 5-3 3z" fill="#eac57f" />
              <path d="M6 6l3-2 2 1 3-4 2 2-4 4v2l-2 2z" fill="#555" />
            </svg>
          </Tool>
        </ToolCol>
      </RBody>
      <RLabel>
        <span>Zwischena...</span>
        <Launcher />
      </RLabel>
    </RGroup>

    <RGroup>
      <RBody $pad={4}>
        <ToolCol>
          <ToolRow>
            <Combo $width={91}>
              <select aria-label="Schriftart">
                <option>Calibri (Textkörper)</option>
              </select>
            </Combo>
            <Combo $width={61}>
              <select aria-label="Schriftgrad">
                <option>11</option>
              </select>
            </Combo>
            <Tool type="button" $w={24} aria-label="Schrift vergrössern">
              <svg width="16" height="16" viewBox="0 0 16 16">
                <path d="M1 14L5 4h1l4 10M3 10h5" fill="none" stroke="#555" strokeWidth="2" />
                <path d="M9 4l3-3 3 3z" fill="#2b71b8" />
              </svg>
            </Tool>
            <Tool type="button" $w={24} aria-label="Schrift verkleinern">
              <svg width="16" height="16" viewBox="0 0 16 16">
                <path d="M2 14L5 6h1l3 8M3 11h5" fill="none" stroke="#555" strokeWidth="2" />
                <path d="M9 1l3 3 3-3z" fill="#2b71b8" />
              </svg>
            </Tool>
          </ToolRow>
          <ToolRow>
            <Tool type="button">
              <Glyph>F</Glyph>
            </Tool>
            <Tool type="button">
              <Glyph $italic>K</Glyph>
            </Tool>
            <Tool type="button">
              <Glyph $under>U</Glyph>
            </Tool>
            <Rule />
            <Tool type="button" aria-label="Aufzählung">
              <svg width="16" height="16" viewBox="0 0 16 16">
                <path d="M1 1h3v3H1zM1 7h3v3H1zM1 13h3v3H1z" fill="#2b71b8" />
                <path d="M6 2.500h9M6 8.500h9M6 14.500h9" stroke="#666" />
              </svg>
            </Tool>
            <Drop type="button" aria-label="Aufzählungsarten" />
            <Tool type="button" aria-label="Nummerierung">
              <svg width="16" height="16" viewBox="0 0 16 16">
                <path d="M1 1h1v4M1 7h2v1l-2 2h2M1 12h2v3H1M2 13.500h1" stroke="#2b71b8" fill="none" />
                <path d="M6 2.500h9M6 8.500h9M6 14.500h9" stroke="#666" />
              </svg>
            </Tool>
            <Drop type="button" aria-label="Nummerierungsarten" />
            <Rule />
            <Tool type="button" aria-label="Einzug verkleinern">
              <svg width="18" height="14" viewBox="0 0 18 14">
                <path d="M1 1.500h16M10 4.500h7M10 7.500h7M10 10.500h7M1 13.500h16" stroke="#666" />
                <path d="M8 7H2M5 4L2 7l3 3" stroke="#2b71b8" strokeWidth="2" fill="none" />
              </svg>
            </Tool>
            <Tool type="button" aria-label="Einzug vergrössern">
              <svg width="18" height="14" viewBox="0 0 18 14">
                <path d="M1 1.500h16M10 4.500h7M10 7.500h7M10 10.500h7M1 13.500h16" stroke="#666" />
                <path d="M1 7h6M4 4l3 3-3 3" stroke="#2b71b8" strokeWidth="2" fill="none" />
              </svg>
            </Tool>
          </ToolRow>
          <ToolRow>
            <Tool type="button" aria-label="Texthervorhebung">
              <svg width="16" height="17" viewBox="0 0 16 17">
                <path d="M0 12h16v4H0z" fill="#ff0" />
                <path d="M4 4H1M4 4v5H1V6h3M6 1v8h3V5H6" stroke="#555" fill="none" />
                <path d="M15 2L8 11" stroke="#777" strokeWidth="3" />
              </svg>
            </Tool>
            <Drop type="button" aria-label="Hervorhebungsfarben" />
            <Tool type="button" aria-label="Schriftfarbe">
              <svg width="16" height="17" viewBox="0 0 16 17">
                <path d="M0 12h16v4H0z" fill="#f00" />
                <path d="M4 11L8 1l4 10M5 7h6" stroke="#555" strokeWidth="2" fill="none" />
              </svg>
            </Tool>
            <Drop type="button" aria-label="Schriftfarben" />
            <Rule />
            <Tool type="button" $on aria-label="Linksbündig">
              <Lines rows={[[1, 14], [1, 9], [1, 14], [1, 9]]} />
            </Tool>
            <Tool type="button" aria-label="Zentriert">
              <Lines rows={[[1, 14], [4, 8], [1, 14], [4, 8]]} />
            </Tool>
            <Tool type="button" aria-label="Rechtsbündig">
              <Lines rows={[[1, 14], [6, 9], [1, 14], [6, 9]]} />
            </Tool>
            <Rule />
            <Tool type="button" aria-label="Formatierung löschen">
              <svg width="16" height="16" viewBox="0 0 16 16">
                <path d="M1 9l3-8 3 6M2 6h4" stroke="#555" fill="none" strokeWidth="1.500" />
                <path d="M3 11l7-7 5 4-7 7H6z" fill="#ee8098" />
              </svg>
            </Tool>
          </ToolRow>
        </ToolCol>
      </RBody>
      <RLabel>
        <span>Text</span>
        <Launcher />
      </RLabel>
    </RGroup>

    <RGroup>
      <RBody>
        <Big type="button">
          <BigIcon $boxed>
            <svg width="18" height="14" viewBox="0 0 18 14">
              <path d="M1 1h7v11H1zM9 1h7v11H9z" fill="#fff" stroke="#2b71b8" />
              <path d="M3 4.500h4M3 6.500h4M3 8.500h4M10 4.500h4M10 6.500h4M10 8.500h4" stroke="#888" />
              <path d="M16 1h2v3h-2z" fill="#d83b01" />
              <path d="M16 5h2v3h-2z" fill="#2b71b8" />
              <path d="M16 9h2v3h-2z" fill="#2a9d8f" />
            </svg>
          </BigIcon>
          Namen
          <Caret />
        </Big>
      </RBody>
    </RGroup>

    <RGroup>
      <RBody $pad={6}>
        <ToolCol>
          <Wide type="button">
            <WideIcon>
              <svg width="10" height="15" viewBox="0 0 10 15">
                <path d="M3 4v6c0 2 3 2 3 0V3c0-3-5-3-5 0v8c0 4 7 4 7 0V3" fill="none" stroke="#666" />
              </svg>
            </WideIcon>
            Datei anfügen <WideCaret />
          </Wide>
          <Wide type="button">
            <WideIcon>
              <svg width="15" height="14" viewBox="0 0 15 14">
                <path d="M5 3h10v10H3z" fill="#eac57f" />
                <path d="M5 13l9-9" stroke="#fff" />
                <path d="M3 3v5c0 2 2 2 2 0V3c0-3-4-3-4 0v6c0 3 6 3 6 0V3" fill="none" stroke="#666" />
              </svg>
            </WideIcon>
            Element anfügen <WideCaret />
          </Wide>
          <Wide type="button">
            <WideIcon>
              <svg width="16" height="16" viewBox="0 0 16 16">
                <path d="M1 1h8l3 3v11H1z" fill="#fff" stroke="#555" />
                <path d="M14 4l-7 8-2 1 1-3 7-7z" fill="#2b71b8" stroke="#2b71b8" />
              </svg>
            </WideIcon>
            Signatur <WideCaret />
          </Wide>
        </ToolCol>
      </RBody>
      <RLabel>
        <span>Einfügen</span>
      </RLabel>
    </RGroup>

    <RGroup>
      <RBody $pad={8}>
        <ToolCol>
          <ToolRow>
            <Tool type="button" aria-label="Nachverfolgung">
              <svg width="13" height="14" viewBox="0 0 13 14">
                <path d="M1 0h2v14H1z" fill="#777" />
                <path d="M4 1l8 4-8 4z" fill="#e2502c" />
              </svg>
            </Tool>
            <Drop type="button" aria-label="Fristen" />
          </ToolRow>
          <Tool type="button" aria-label="Wichtigkeit hoch">
            <svg width="4" height="12" viewBox="0 0 4 12">
              <path d="M0 0h4L3 8H1zM1 9h2v3H1z" fill="#e2502c" />
            </svg>
          </Tool>
          <Tool type="button" aria-label="Wichtigkeit niedrig">
            <svg width="10" height="12" viewBox="0 0 10 12">
              <path d="M5 0v10M1 6l4 4 4-4" fill="none" stroke="#2b71b8" strokeWidth="2" />
            </svg>
          </Tool>
        </ToolCol>
      </RBody>
      <RLabel>
        <span>M...</span>
        <Launcher />
      </RLabel>
    </RGroup>

    <RGroup>
      <RBody>
        <Big type="button">
          <BigIcon>
            <svg width="28" height="28" viewBox="0 0 28 28">
              <path d="M15 1l12 6v13l-12 7L4 20V7z" fill="#0072c6" />
              <path d="M7 13l7 3v8l-7 4-7-4v-8z" fill="#0072c6" stroke="#f1f1f1" strokeWidth="1.500" />
            </svg>
          </BigIcon>
          Office-
          <br />
          Add-Ins
        </Big>
      </RBody>
      <RLabel>
        <span>Add-Ins</span>
      </RLabel>
    </RGroup>

    <RGroup>
      <RBody $pad={7}>
        <ToolCol>
          <Wide type="button">
            <WideIcon>
              <svg width="16" height="16" viewBox="0 0 16 16">
                <path d="M4 1h6v6L8 5zM1 5h6v6L4 8z" fill="#2684ff" />
                <path d="M4 1l3 3h3zM1 5l3 3h3z" fill="#0052cc" />
                <circle cx="12" cy="12" r="4" fill="#4fdc3a" />
                <path d="M12 10v4M10 12h4" stroke="#003c00" />
              </svg>
            </WideIcon>
            Create Jira Issue
          </Wide>
          <Wide type="button">
            <WideIcon>
              <svg width="16" height="14" viewBox="0 0 16 14">
                <ellipse cx="8" cy="6" rx="7" ry="5" fill="#fff" stroke="#bbb" />
                <path d="M7 1h5v5l-2-1zM4 4h5v6L7 7z" fill="#2684ff" />
                <path d="M2 10l-1 3 4-2z" fill="#bbb" />
              </svg>
            </WideIcon>
            Add as Comment
          </Wide>
        </ToolCol>
      </RBody>
      <RLabel>
        <span>Jira Tasks</span>
      </RLabel>
    </RGroup>

    <RGroup>
      <RBody>
        <Big type="button">
          <BigIcon>
            <svg width="32" height="32" viewBox="0 0 32 32" fill="none" stroke="#fff">
              <path d="M0 0h32v32H0z" fill="#e2491d" stroke="none" />
              <path d="M5 7h20v4H5zM5 11v14h10M25 11v3M9 4v5M21 4v5" strokeWidth="1.500" />
              <path d="M9 15h2M13 15h2M9 19h2M13 19h1M9 22h2" strokeWidth="1.500" />
              <circle cx="21" cy="20" r="6" strokeWidth="1.500" />
              <path d="M21 16v5h2M25 24l5 5" strokeWidth="1.500" />
            </svg>
          </BigIcon>
          New
          <br />
          Meeting Poll
        </Big>
      </RBody>
      <RLabel>
        <span>FindTime</span>
      </RLabel>
    </RGroup>

    <RGroup>
      <RBody>
        <Big type="button">
          <BigIcon>
            <svg width="32" height="32" viewBox="0 0 32 32" fill="none" stroke="#0097a7" strokeWidth="2">
              <path d="M16 2a14 14 0 1 1-14 13M16 8a8 8 0 1 1-1 16M15 13a4 4 0 0 1 3 6" />
            </svg>
          </BigIcon>
          Insights
        </Big>
      </RBody>
    </RGroup>

    <RGroup>
      <RBody>
        <Big type="button">
          <BigIcon>
            <svg width="26" height="32" viewBox="0 0 26 32">
              <path d="M13 26H2V1h13l6 6v6M15 1v6h6" fill="none" stroke="#1a6fbf" strokeWidth="2" />
              <path d="M19 15h5l-2 5h4l-9 12 2-9h-4z" fill="#0a56a5" />
            </svg>
          </BigIcon>
          Vorlagen
          <br />
          anzeigen
        </Big>
      </RBody>
      <RLabel>
        <span>Meine Vo...</span>
      </RLabel>
    </RGroup>

    <CollapseButton type="button" aria-label="Menüband reduzieren">
      <Chevron d="M1 7l4-4 4 4" />
    </CollapseButton>
  </Ribbon>
);

const Mail = () => (
  <MailWindow role="dialog" aria-label="Nachricht">
    <MailTitle>
      <QuickBar>
        <svg width="15" height="15" viewBox="0 0 15 15">
          <path d="M1 1h13v13H1z" fill="none" stroke="#fff" strokeWidth="2" />
          <path d="M1 7h13M5 14v-4h5v4" fill="none" stroke="#fff" strokeWidth="2" />
        </svg>
        <svg width="15" height="15" viewBox="0 0 15 15">
          <path d="M6 1L2 5l4 4M2 5h7c5 0 5 7 1 8" fill="none" stroke="#fff" strokeWidth="2" />
        </svg>
        <svg width="15" height="15" viewBox="0 0 15 15">
          <path d="M4 3a6 6 0 1 0 6 0M9 6V2h4" fill="none" stroke="#fff" strokeWidth="2" />
        </svg>
        <svg width="15" height="15" viewBox="0 0 15 15">
          <path d="M7 13V2M3 6l4-4 4 4" fill="none" stroke="#3f94d6" strokeWidth="2" />
        </svg>
        <svg width="15" height="15" viewBox="0 0 15 15">
          <path d="M7 1v11M3 8l4 4 4-4" fill="none" stroke="#3f94d6" strokeWidth="2" />
        </svg>
        <svg width="15" height="15" viewBox="0 0 15 15">
          <path d="M4 6h6v1H4zM4 9h6l-3 3z" fill="#fff" />
        </svg>
      </QuickBar>
      <MailName>Unbenannt - Nachricht (HTML)</MailName>
      <MailCaption>
        <svg width="14" height="11" viewBox="0 0 14 11" fill="none" stroke="#6db1e4">
          <path d="M.5.5h13v10H.5zM1 3h12M7 9V5M5 7l2-2 2 2" />
        </svg>
        <svg width="12" height="11" viewBox="0 0 12 11" stroke="#6db1e4">
          <path d="M1 5.500h10" />
        </svg>
        <svg width="12" height="11" viewBox="0 0 12 11" fill="none" stroke="#6db1e4">
          <path d="M1 .5h10v10H1z" />
        </svg>
        <svg width="12" height="11" viewBox="0 0 12 11" stroke="#6db1e4">
          <path d="M1 0l10 11M11 0L1 11" />
        </svg>
      </MailCaption>
    </MailTitle>
    <TabBar>
      <Tab type="button" $width={63}>Datei</Tab>
      <Tab type="button" $width={79} $on>Nachricht</Tab>
      <Tab type="button" $width={77}>Einfügen</Tab>
      <Tab type="button" $width={79}>Optionen</Tab>
      <Tab type="button" $width={115}>Text formatieren</Tab>
      <Tab type="button" $width={89}>Überprüfen</Tab>
      <Tab type="button" $width={71}>Add-Ins</Tab>
      <TellMe type="button">
        <svg width="11" height="15" viewBox="0 0 11 15" fill="none" stroke="#fff">
          <path d="M3.500 10c0-2-3-3-3-5.500 0-5 10-5 10 0 0 2.500-3 3.500-3 5.500zM3.500 12h4M4 14h3" />
        </svg>
        Was möchten Sie tun?
      </TellMe>
    </TabBar>
    <MailRibbon />
    <MailForm>
      <Send type="button">
        <svg width="28" height="16" viewBox="0 0 28 16">
          <path d="M5.500 1.500h20v13h-20z" fill="#fff" stroke="#777" />
          <path d="M0 4h4M1 7h3M2 10h2M9 9.500h10M9 11.500h8" stroke="#888" />
          <path d="M21 4h3v4h-3z" fill="#2b71b8" />
        </svg>
        Senden
      </Send>
      <Boxed type="button">An...</Boxed>
      <MailInput aria-label="An" defaultValue="ecase@infogate.ch" />
      <Boxed type="button">Cc...</Boxed>
      <MailInput aria-label="Cc" />
      <Boxed type="button">Bcc...</Boxed>
      <MailInput aria-label="Bcc" />
      <SubjectLabel htmlFor="subject">Betreff</SubjectLabel>
      <MailInput id="subject" />
    </MailForm>
    <MailBody>
      <Greeting>Freundliche Grüsse</Greeting>
      <p>
        Infogate AG | <SiteLink href="#site">www.infogate.ch</SiteLink> |
      </p>
      <p>Hagenholzstrasse 81a, 8050 Zürich | Tel. +41 44 306 56 66</p>
      <Brand>
        INFOG<span>A</span>TE
      </Brand>
    </MailBody>
  </MailWindow>
);

export default function App() {
  return (
    <Page>
      <GlobalStyle />
      <CurlShadow viewBox="0 0 1980 40" preserveAspectRatio="none" aria-hidden="true">
        <defs>
          <linearGradient id="curl">
            <stop offset="0" stopColor="#cfcfcf" />
            <stop offset="0.12" stopColor="#a8a8a8" />
            <stop offset="0.25" stopColor="#7c7c7c" />
            <stop offset="0.75" stopColor="#7c7c7c" />
            <stop offset="0.88" stopColor="#a8a8a8" />
            <stop offset="1" stopColor="#cfcfcf" />
          </linearGradient>
          <filter id="soft" x="-1%" y="-20%" width="102%" height="150%">
            <feGaussianBlur stdDeviation="1.500" />
          </filter>
        </defs>
        <path
          d="M4 0v30h66C250 22 440 16 680 14h600c250 2 440 8 620 16h68V0z"
          fill="url(#curl)"
          filter="url(#soft)"
        />
      </CurlShadow>
      <Card>
        <TitleBar>
          <svg width="16" height="16" viewBox="0 0 16 16" aria-hidden="true">
            <path d="M1 7c1-8 11-9 14-5v14H7v-3z" fill="#d4d4d4" />
            <path d="M15 1v15H6" stroke="#333" fill="none" />
            <path d="M0 8h4M5 7v3h2M8 7h2v3H8zM11 7h2v3M7 12v3M8 12l2 3v-3M12 12h2M13 12v3" stroke="#222" fill="none" />
            <path d="M7 8h2v1H7z" fill="#c02020" />
          </svg>
          <TitleText>e-Case FM.Net 14.0.0.6403</TitleText>
          <span>Mitarbeiter: Admin Admin</span>
          <CaptionButtons>
            <svg width="12" height="12" viewBox="0 0 12 12" stroke="#888">
              <path d="M1 6.500h10" />
            </svg>
            <svg width="12" height="12" viewBox="0 0 12 12" fill="none" stroke="#888">
              <path d="M1.500 3.500h7v7h-7zM3.500 3V1.500h7v7H9" />
            </svg>
            <svg width="12" height="12" viewBox="0 0 12 12" stroke="#888">
              <path d="M1 1l10 10M11 1L1 11" />
            </svg>
          </CaptionButtons>
        </TitleBar>
        <MenuBar>
          {["Datei", "Dossier", "Auswertungen", "Verwaltung", "My Links", "?"].map((name) => (
            <MenuItem key={name} type="button">
              {name}
            </MenuItem>
          ))}
        </MenuBar>
        <Shell>
          <Panels data={leftPanels} />
          <Centre>
            <Search />
            <ObjectGrid />
            <PagerStrip>
              <TextBox $width={60} aria-label="Seite" />
              <TextBox $width={60} aria-label="Anzahl" />
            </PagerStrip>
            <Relations />
            <DetailGrid />
          </Centre>
          <Panels data={rightPanels} />
        </Shell>
        <Mail />
        <Mark $x={255} $y={707} $w={337} $h={31} />
        <Badge $x={596} $y={708}>2</Badge>
        <Mark $x={1665} $y={648} $w={107} $h={30} />
        <Badge $x={1776} $y={649}>1</Badge>
        <Mark $x={1665} $y={1021} $w={84} $h={31} />
        <Badge $x={1756} $y={1022}>3</Badge>
        <ArrowLayer width="600" height="220" viewBox="1065 840 600 220" aria-hidden="true">
          <g style={{ filter: "drop-shadow(2px 3px 1px rgba(0,0,0,.45))" }}>
            <path d="M1104 858L1642 1035" stroke="#f00" strokeWidth="6" />
            <path d="M1074 848h38l-8 22z" fill="#f00" />
          </g>
        </ArrowLayer>
        <Pointer width="13" height="20" viewBox="0 0 13 20" aria-hidden="true">
          <path d="M1 1v15l4-3 3 6 2-1-3-6h5z" fill="#fff" stroke="#000" />
        </Pointer>
      </Card>
    </Page>
  );
}
